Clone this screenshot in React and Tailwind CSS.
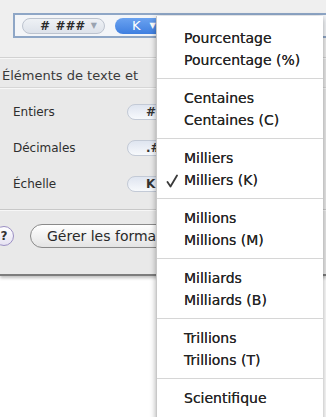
const groups = [
  ["Pourcentage", "Pourcentage (%)"],
  ["Centaines", "Centaines (C)"],
  ["Milliers", "Milliers (K)"],
  ["Millions", "Millions (M)"],
  ["Milliards", "Milliards (B)"],
  ["Trillions", "Trillions (T)"],
  ["Scientifique"],
];

const font = { fontFamily: '"DejaVu Sans", "Liberation Sans", sans-serif' };

function Check() {
  return (
    <svg width="12" height="14" viewBox="0 0 12 14" className="absolute left-[9px] top-[5px]">
      <path d="M1.5 8 L4.5 12.5 L11 1.5" fill="none" stroke="#3a3a3a" strokeWidth="1.8" strokeLinecap="round" strokeLinejoin="round" />
    </svg>
  );
}

function Menu() {
  return (
    <div className="absolute left-[156px] top-[16px] w-[167px] h-[420px] bg-white border-l border-[#c8c8c8] shadow-[0_2px_6px_rgba(0,0,0,0.35)] text-[14px] text-[#242424] [text-shadow:0_0_0.5px_#444]" style={font}>
      {groups.map((g, i) => (
        <div key={i}>
          {i > 0 && <div className="h-px bg-[#d6d6d6]" />}
          <div className={i === 0 ? "pt-[11px] pb-[7px]" : "pt-[8px] pb-[7px]"}>
            {g.map((t, j) => (
              <div key={j} className="relative h-[22px] leading-[22px] pl-[27px] whitespace-nowrap">
                {i === 2 && j === 1 && <Check />}
                {t}
              </div>
            ))}
          </div>
        </div>
      ))}
    </div>
  );
}

function SmallPill({ children }) {
  return (
    <div className="w-[40px] h-[16px] shrink-0 rounded-l-full border border-[#c3cad6] bg-gradient-to-b from-[#dfe5f0] to-[#f7f9fc] flex items-center pl-[18px] text-[12px] font-bold text-[#333]">
      {children}
    </div>
  );
}

export default function App() {
  return (
    <div className="relative w-[326px] h-[417px] overflow-hidden bg-white" style={font}>
      <div className="h-[276px] bg-[#e9e9e9] border-b-2 border-[#7d7d7d] shadow-[0_2px_3px_rgba(0,0,0,0.25)]">
        <div className="pt-[13px] bg-[#efefef]">
          <div className="ml-[13px] h-[25px] border-y-2 border-l-2 border-[#8ea6c6] bg-[#f3f5f8] flex items-center gap-[10px] pl-[7px]">
            <div className="w-[83px] h-[16px] rounded-full border border-[#bcc3cf] bg-gradient-to-b from-[#eef1f5] to-[#dde2ea] flex items-center pl-[17px] text-[12px] italic font-bold text-[#2a2a2a]">
              <span className="tracking-[1.5px]"># ###</span>
              <span className="ml-auto mr-[7px] text-[8px] text-[#9aa3b0] not-italic">▼</span>
            </div>
            <div className="w-[60px] h-[16px] rounded-full bg-gradient-to-b from-[#6aa2f0] to-[#3f7fe0] flex items-center pl-[17px] text-[13px] text-white">
              K<span className="ml-[9px] text-[8px]">▼</span>
            </div>
          </div>
          <div className="h-[19px]" />
        </div>
        <div className="h-px bg-[#d2d2d2]" />
        <div className="h-px bg-[#f7f7f7]" />
        <div className="h-[28px] flex items-center pt-[6px] pl-[2px] text-[13px] text-[#3a3a3a] whitespace-nowrap">
          Éléments de texte et
        </div>
        <div className="h-px bg-[#d6d6d6]" />
        <div className="h-px bg-[#f7f7f7]" />
        <div className="pt-[5px] w-[157px] overflow-hidden">
          {[["Entiers", "#"], ["Décimales", ".#"], ["Échelle", "K"]].map(([l, v]) => (
            <div key={l} className="h-[36px] flex items-center pl-[13px] text-[12px] text-[#2e2e2e]">
              <span className="w-[114px] shrink-0">{l}</span>
              <SmallPill>{v}</SmallPill>
            </div>
          ))}
        </div>
        <div className="mt-[7px] h-px bg-[#c8c8c8]" />
        <div className="h-px bg-[#f7f7f7]" />
        <div className="pt-[13px] flex items-center">
          <div className="ml-[-6px] w-[20px] h-[20px] rounded-full border border-[#9b8fc4] bg-gradient-to-b from-[#ffffff] to-[#e6e2f2] flex items-center justify-center text-[12px] font-bold text-[#333]">
            ?
          </div>
          <div className="ml-[16px] w-[250px] h-[24px] rounded-full border border-[#8a8a8a] bg-gradient-to-b from-[#ffffff] to-[#e4e4e4] flex items-center pl-[16px] text-[14px] text-[#2a2a2a] whitespace-nowrap">
            Gérer les formats
          </div>
        </div>
      </div>
      <Menu />
    </div>
  );
}
